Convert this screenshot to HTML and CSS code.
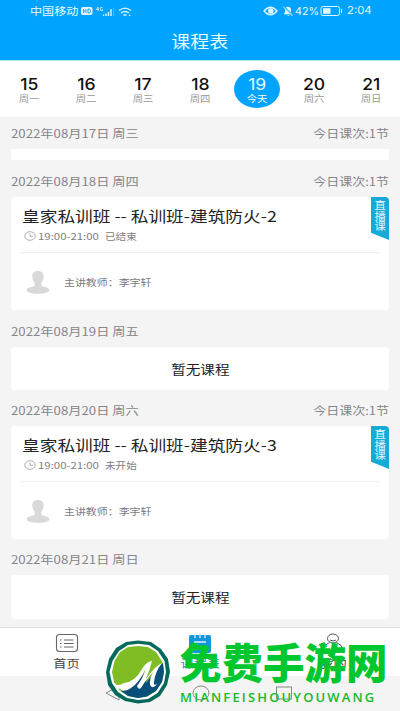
FILE: index.html
```html
<!DOCTYPE html>
<html lang="zh-CN">
<head>
<meta charset="utf-8">
<title>课程表</title>
<link rel="stylesheet" href="styles.css">
</head>
<body>
<svg class="defs" width="0" height="0" aria-hidden="true">
  <symbol id="clock" viewBox="0 0 12 10"><g fill="none" stroke="#999" stroke-width=".8"><ellipse cx="6" cy="5" rx="5.2" ry="4.3"/><path d="M6 2.5v2.8h3"/></g></symbol>
  <symbol id="avatar" viewBox="0 0 24 24"><path fill="#d9d9d9" d="M12 1c3.600 0 5.700 2.200 5.700 5.500 0 2.500-1 4.500-2.300 6v3c.5 1.500 8 1.500 8 4.700 0 2-5 3.600-11.400 3.600S.6 22.200.6 20.200c0-3.200 7.500-3.200 8-4.700v-3c-1.300-1.500-2.300-3.500-2.300-6C6.300 3.200 8.400 1 12 1z"/></symbol>
</svg>
<div class="screen">
  <header class="top">
    <div class="status">
      <div class="status-left">
        <span class="t carrier">中国移动</span>
        <svg width="53" height="14" viewBox="0 0 53 14">
          <rect x="1" y="3" width="11.500" height="8" rx="2" fill="#e2f6ff"/>
          <path d="M3.500 5v4M6 5v4M3.500 7H6M8 5v4h1q1.500 0 1.500-2T9 5z" stroke="#1a9ee0" stroke-width=".9" fill="none"/>
          <path d="M18 3l-1.500 2.500h2.200M18.200 3v4M22.500 3.600q-2.300-1-2.300 1.400t2.300 1.500V5" stroke="#d9f4ff" stroke-width=".8" fill="none"/>
          <path d="M23.500 12v-1.500M26 12V9.500M28.500 12V8M31 12V5" stroke="#d9f4ff" stroke-width="1.400"/>
          <path d="M33.700 4v8" stroke="#5ac4ff" stroke-width=".8"/>
          <path d="M39 6.500q6-4.800 12 0M41 9q4-3 8 0M43.500 11.300q1.500-1 3 0" fill="none" stroke="#d9f4ff" stroke-width="1.400"/>
          <path d="M48.500 12l1.300-1.500L51 12z" fill="#d9f4ff"/>
        </svg>
      </div>
      <div class="status-right">
        <svg width="31" height="14" viewBox="0 0 31 14">
          <path d="M1 7q6.500-7.500 13 0-6.500 7.500-13 0z" fill="none" stroke="#e2f6ff" stroke-width="1.300"/><circle cx="7.800" cy="7" r="2.700" fill="#e2f6ff"/>
          <path d="M20.500 10.300h9L28 8.500V6q0-3-3-3.300-3 .3-3 3.300v2.500zM24 11.300h2.500l-1.200 1z" fill="#e2f6ff"/><path d="M20 1.800l10 10" stroke="#00a4ff" stroke-width="1.500"/><path d="M20 2.500l9.500 9.500" stroke="#e2f6ff"/>
        </svg>
        <span class="t pct">42%</span>
        <svg class="battery" width="23" height="12" viewBox="0 0 23 12"><rect x="1" y="1.500" width="18.500" height="9" rx="2" fill="none" stroke="#e2f6ff"/><rect x="3" y="3.200" width="7.500" height="5.600" fill="#e2f6ff"/><path d="M21.500 4v4" stroke="#e2f6ff"/></svg>
        <span class="t clock-text">2:04</span>
      </div>
    </div>
    <h1><span class="t">课程表</span></h1>
  </header>

  <nav class="week">
    <div class="day"><b class="t">15</b><span class="t">周一</span></div>
    <div class="day"><b class="t">16</b><span class="t">周二</span></div>
    <div class="day"><b class="t">17</b><span class="t">周三</span></div>
    <div class="day"><b class="t">18</b><span class="t">周四</span></div>
    <div class="day today"><b class="t">19</b><span class="t">今天</span></div>
    <div class="day"><b class="t">20</b><span class="t">周六</span></div>
    <div class="day"><b class="t">21</b><span class="t">周日</span></div>
  </nav>

  <main class="list">
    <div class="date"><span class="t">2022年08月17日 周三</span><span class="t count">今日课次:1节</span></div>
    <div class="card sliver"></div>

    <div class="date"><span class="t">2022年08月18日 周四</span><span class="t count">今日课次:1节</span></div>
    <article class="card course">
      <div class="ribbon"><span>直播课</span></div>
      <h2><span class="t">皇家私训班 -- 私训班-建筑防火-2</span></h2>
      <div class="time"><svg width="12" height="10"><use href="#clock"/></svg><span class="t hours">19:00-21:00</span><span class="t state">已结束</span></div>
      <div class="teacher"><svg width="24" height="24"><use href="#avatar"/></svg><span class="t">主讲教师：李宇轩</span></div>
    </article>

    <div class="date"><span class="t">2022年08月19日 周五</span></div>
    <div class="card empty"><span class="t">暂无课程</span></div>

    <div class="date short"><span class="t">2022年08月20日 周六</span><span class="t count">今日课次:1节</span></div>
    <article class="card course">
      <div class="ribbon"><span>直播课</span></div>
      <h2><span class="t">皇家私训班 -- 私训班-建筑防火-3</span></h2>
      <div class="time"><svg width="12" height="10"><use href="#clock"/></svg><span class="t hours">19:00-21:00</span><span class="t state">未开始</span></div>
      <div class="teacher"><svg width="24" height="24"><use href="#avatar"/></svg><span class="t">主讲教师：李宇轩</span></div>
    </article>

    <div class="date short"><span class="t">2022年08月21日 周日</span></div>
    <div class="card empty last"><span class="t">暂无课程</span></div>
  </main>

  <nav class="tabs">
    <div class="tab">
      <svg width="24" height="20" viewBox="0 0 24 20"><rect x="1.500" y="1.500" width="21" height="17" rx="3" fill="none" stroke="#666" stroke-width="1.100"/><path d="M5 7h1.500M5 10.500h1.500M5 14h1.500M9 7h9.500M9 10.500h9.500M9 14h9.500" stroke="#666" stroke-width="1.100"/></svg>
      <span class="t">首页</span>
    </div>
    <div class="tab active">
      <svg width="24" height="20" viewBox="0 0 24 20"><path fill="#1296db" d="M3 2h18q2 0 2 2v14q0 2-2 2H3q-2 0-2-2V4q0-2 2-2z"/><path d="M7 0v5M12 0v5M17 0v5M6 9h12M6 14h7" stroke="#d7effc" stroke-width="1.300"/></svg>
      <span class="t">课程表</span>
    </div>
    <div class="tab">
      <svg width="24" height="20" viewBox="0 0 24 20"><g fill="none" stroke="#555"><ellipse cx="12" cy="5.500" rx="5.500" ry="4.500"/><path d="M9 7q3 2 6 0M8.500 9.500Q2.500 12 2.500 16q0 2.500 3 2.500h13q3 0 3-2.500 0-4-6-6.500"/></g></svg>
      <span class="t">我的</span>
    </div>
  </nav>
  <footer class="system">
    <svg width="20" height="18" viewBox="0 0 20 18"><path d="M16 2v14L3 9z"/></svg>
    <svg width="20" height="18" viewBox="0 0 20 18"><ellipse cx="10" cy="9" rx="8" ry="7"/></svg>
    <svg width="20" height="18" viewBox="0 0 20 18"><rect x="2.500" y="3" width="15" height="12"/></svg>
  </footer>

  <div class="watermark">
    <svg width="68" height="66" viewBox="0 0 68 66">
      <path d="M22 3 L34 1.500 L47 3 L57 10 L64 20 L66 33 L63 46 L56 57 L46 63 L34 64.500 L21 62 L11 56 L4 46 L2 33 L5 20 L12 9Z" fill="#04685b"/>
      <path d="M24 6 L34 4.800 L45 6 L54 12 L60.500 22 L62 33 L60 44 L53.500 54 L44 60 L34 61 L23 59 L14 53 L8 44 L5.500 33 L8.500 22 L15 12Z" fill="#fff"/>
      <path d="M24 8 L34 7 L44 8 L52 13 L58.500 23 L60 33 L58 43 L52 52 L43 57.500 L34 59 L24 57 L15 51 L10 43 L8 33 L10.500 22 L16 13Z" fill="#80bd25"/>
      <path d="M59 24 L60 33 L58 43 L52 52 L43 57.500 L34 59 L24 57 L17 52Q28 50 35 40L44 30L42 44L56 26Z" fill="#085079"/>
      <path d="M9 44Q14 48 20 44Q31 43 38 30Q43 22 48 22Q46 30 42 40Q51 27 58 24Q51 33 50 43Q49 47 53 45Q49 51 46 46Q45 41 49 33Q41 42 37 49Q34 51 33 47Q39 39 42 29Q35 44 27 49Q20 54 16 50Q11 49 9 44Z" fill="#fff"/>
    </svg>
    <div class="brand">
      <div class="brand-cn">免费手游网</div>
      <div class="brand-en">MIANFEISHOUYOUWANG</div>
    </div>
  </div>
</div>
</body>
</html>
```

FILE: styles.css
```css
* { box-sizing: border-box; }

body {
  margin: 0;
  font-family: "Noto Sans CJK SC", sans-serif;
  background: #f4f4f5;
}

.defs { display: block; }

.screen {
  position: relative;
  width: 400px;
  height: 711px;
  overflow: hidden;
}

svg { display: block; flex: none; }

/* Text is slightly wider than its natural proportions. */
.t {
  display: inline-block;
  white-space: nowrap;
  transform: scaleX(1.15);
  transform-origin: left center;
}

.top {
  height: 61px;
  background: #00a4ff;
  border-bottom: 1px solid #a4e9fa;
  color: #e9f9ff;
}

.status {
  display: flex;
  justify-content: space-between;
  height: 22px;
  padding: 0 28px 0 30px;
  font-size: 10.5px;
  line-height: 22px;
}

.status-left, .status-right { display: flex; align-items: center; }
.carrier { width: 50px; }
.pct { width: 26px; margin-left: 1px; font-family: Inter, sans-serif; font-size: 10px; transform: scaleX(1.08); }
.battery { margin-left: -1px; }
.clock-text { width: 25px; margin-left: 4px; font-family: Inter, sans-serif; font-size: 10.500px; transform: scaleX(1.08); }

h1 {
  margin: 0;
  font-size: 16.500px;
  font-weight: 400;
  line-height: 38px;
  text-align: center;
}
h1 .t { transform-origin: center; }

.week {
  display: grid;
  grid-template-columns: repeat(7, 57px);
  justify-content: center;
  align-items: start;
  height: 56px;
  padding-top: 9px;
  background: #fff;
}

.day {
  display: flex;
  flex-direction: column;
  align-items: center;
  justify-self: center;
  width: 46px;
  height: 38px;
  padding-top: 4px;
  color: #999;
}
.day .t { transform-origin: center; }
.day b {
  font-family: Inter, sans-serif;
  font-size: 16px;
  font-weight: 500;
  line-height: 20px;
  color: #111;
  transform: scaleX(1.1);
}
.day span { font-size: 9px; line-height: 10px; }
.today { border-radius: 50%; background: #00a4ff; color: #fff; }
.today b { color: #e9f9ff; font-weight: 400; }

.list { height: 510px; padding: 0 11px; }

.date {
  display: flex;
  justify-content: space-between;
  height: 37px;
  padding-top: 11px;
  font-size: 11.500px;
  line-height: 20px;
  color: #858589;
}
.date.short { height: 36px; padding-top: 10px; }
.count { transform: scaleX(1.13); transform-origin: right center; }
.list > .date:first-child { height: 32px; padding-top: 6px; }

.card {
  position: relative;
  background: #fff;
  border-radius: 4px;
}
.sliver { height: 11px; border-radius: 2px; }

.course { height: 113px; padding: 8px 9px 0 9px; }

h2 {
  margin: 0 0 0 2px;
  font-size: 15px;
  font-weight: 400;
  line-height: 22px;
  color: #222;
}
h2 .t { transform: scaleX(1.18); }

.time {
  display: flex;
  align-items: center;
  height: 25px;
  padding: 0 0 7px 4px;
  font-size: 9.200px;
  line-height: 18px;
  color: #808084;
}
.hours { width: 67px; margin-left: 2px; transform: scaleX(1.24); }

.teacher {
  display: flex;
  align-items: center;
  height: 57px;
  padding: 2px 0 0 6px;
  border-top: 1px solid #eee;
  font-size: 9.500px;
  color: #7c7c80;
}
.teacher .t { margin-left: 14px; }

.ribbon {
  position: absolute;
  top: 0;
  right: 0;
  width: 18px;
  height: 43px;
  padding: 3px 0 0 1px;
  background: #16aad9;
  border-top-right-radius: 4px;
  clip-path: polygon(0 0, 100% 0, 100% 100%, 0 83%);
  color: #e4f8ff;
  font-size: 10.500px;
  line-height: 10.500px;
}
.ribbon span { display: block; width: 11px; margin: 0 auto; word-break: break-all; transform: scaleX(1.08); }

.empty {
  height: 43px;
  font-size: 12.700px;
  line-height: 43px;
  text-align: center;
  color: #222;
}
.empty .t { transform-origin: center; }
.last { height: 44px; }

.tabs {
  display: grid;
  grid-template-columns: repeat(3, 1fr);
  height: 49px;
  background: #fff;
  border-top: 1px solid #dcdcdc;
}
.tab {
  display: flex;
  flex-direction: column;
  align-items: center;
  padding-top: 5px;
  font-size: 11.500px;
  line-height: 20px;
  color: #444;
}
.tab .t { transform-origin: center; }
.active { color: #1296db; }

.system {
  display: grid;
  grid-template-columns: 83px 94px 72px;
  align-items: center;
  height: 34px;
  padding-left: 71px;
}
.system svg { justify-self: center; fill: none; stroke: #888; stroke-width: 1; }

.watermark {
  position: absolute;
  left: 104px;
  top: 639px;
  display: flex;
}
.brand { padding-left: 8px; }
.brand-cn {
  font-size: 41.500px;
  font-weight: 900;
  line-height: 46px;
  height: 50px;
  margin-top: -1px;
  white-space: nowrap;
  color: #00c730;
}
.brand-en {
  font-family: "Open Sans", sans-serif;
  font-size: 13px;
  font-weight: 600;
  line-height: 18px;
  letter-spacing: 2.150px;
  color: #15bc28;
}
```
